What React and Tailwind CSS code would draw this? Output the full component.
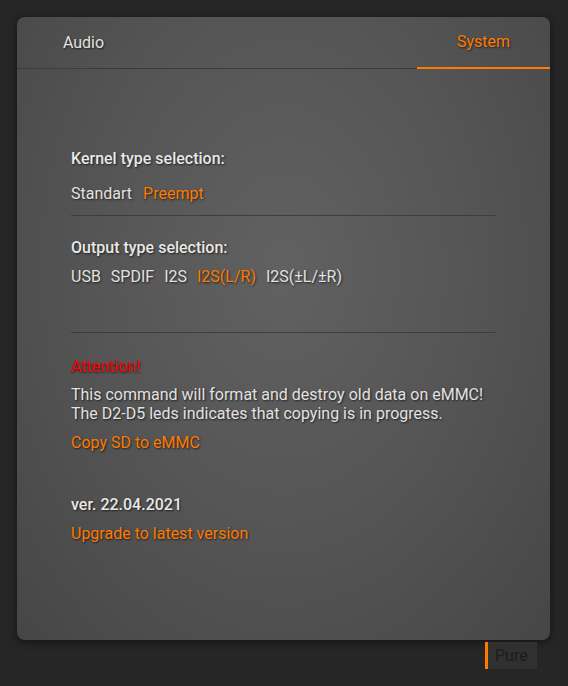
import React, { useState } from 'react';

const shadow = '[text-shadow:1px_1px_2px_rgba(0,0,0,0.65)]';

const Option = ({ label, active, onClick }) => (
  <button
    type="button"
    onClick={onClick}
    className={`leading-5 ${active ? 'text-[#ff7b00]' : 'text-[#e2e2e2]'} [text-shadow:1px_1px_2px_rgba(0,0,0,0.65)]`}
  >
    {label}
  </button>
);

const App = () => {
  const [tab, setTab] = useState('system');
  const [kernel, setKernel] = useState('Preempt');
  const [output, setOutput] = useState('I2S(L/R)');

  return (
    <div className="min-h-screen w-full bg-[#262626] p-[17px] font-['Roboto','Liberation_Sans',sans-serif] text-[16px]">
      <div className="w-[533px] h-[623px] rounded-[8px] bg-[radial-gradient(ellipse_at_50%_40%,#616161_0%,#555555_50%,#464646_100%)] shadow-[0_2px_8px_rgba(0,0,0,0.5)] flex flex-col">
        {/* tabs */}
        <div className="flex justify-between h-[52px] border-b border-[#3c3c3c]">
          <button
            type="button"
            onClick={() => setTab('audio')}
            className={`w-[133px] -mb-px ${tab === 'audio' ? 'text-[#ff7b00] border-b-2 border-[#ff7b00]' : 'text-[#e2e2e2]'} [text-shadow:1px_1px_2px_rgba(0,0,0,0.65)]`}
          >
            Audio
          </button>
          <button
            type="button"
            onClick={() => setTab('system')}
            className={`w-[133px] -mb-px ${tab === 'system' ? 'text-[#ff7b00] border-b-2 border-[#ff7b00]' : 'text-[#e2e2e2]'} [text-shadow:1px_1px_2px_rgba(0,0,0,0.65)]`}
          >
            System
          </button>
        </div>

        <div className="px-[54px] pt-[80px] flex flex-col">
          <div className={`leading-5 text-[#e8e8e8] font-medium ${shadow}`}>Kernel type selection:</div>
          <div className="flex gap-[11px] mt-[15px]">
            {['Standart', 'Preempt'].map((k) => (
              <Option key={k} label={k} active={kernel === k} onClick={() => setKernel(k)} />
            ))}
          </div>
          <div className="h-px bg-[#3e3e3e] mt-[11px]" />

          <div className={`leading-5 text-[#e8e8e8] font-medium mt-[22px] ${shadow}`}>Output type selection:</div>
          <div className="flex gap-[10px] mt-[9px]">
            {['USB', 'SPDIF', 'I2S', 'I2S(L/R)', 'I2S(±L/±R)'].map((o) => (
              <Option key={o} label={o} active={output === o} onClick={() => setOutput(o)} />
            ))}
          </div>
          <div className="h-px bg-[#3e3e3e] mt-[45px]" />

          <div className={`leading-5 text-[#ff0000] mt-[24px] ${shadow}`}>Attention!</div>
          <p className={`leading-[19px] text-[#e2e2e2] mt-[8px] ${shadow}`}>
            This command will format and destroy old data on eMMC!
            <br />
            The D2-D5 leds indicates that copying is in progress.
          </p>
          <button type="button" className={`self-start leading-5 text-[#ff7b00] mt-[10px] ${shadow}`}>
            Copy SD to eMMC
          </button>

          <div className={`leading-5 text-[#e8e8e8] font-medium mt-[42px] ${shadow}`}>ver. 22.04.2021</div>
          <button type="button" className={`self-start leading-5 text-[#ff7b00] mt-[9px] ${shadow}`}>
            Upgrade to latest version
          </button>
        </div>
      </div>

      <div className="w-[533px] flex justify-end pr-[13px] mt-[2px]">
        <div className="h-[27px] w-[52px] bg-[#303030] border-l-[3px] border-[#ff7b00] flex items-center pl-[7px] text-[#1c1c1c] leading-5">
          Pure
        </div>
      </div>
    </div>
  );
};

export default App;
